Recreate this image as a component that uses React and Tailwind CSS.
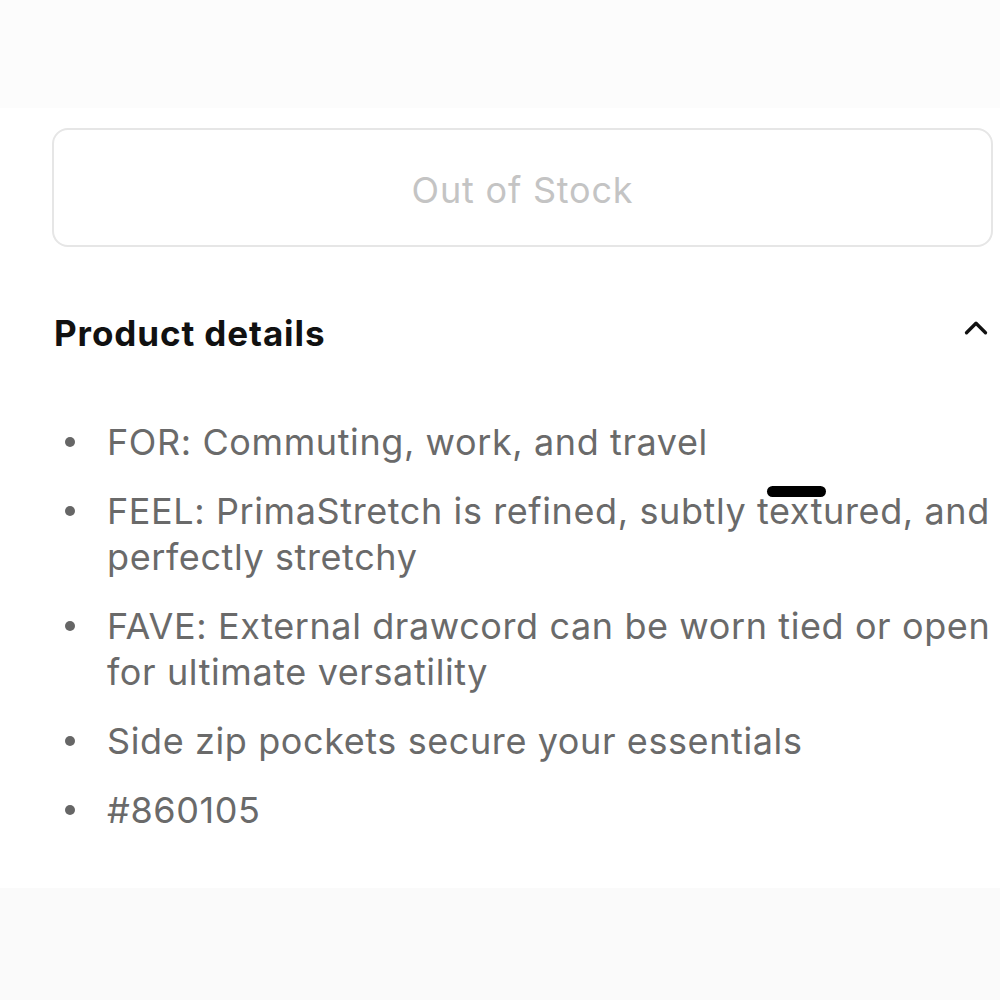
import { ChevronUp } from "lucide-react";

const details = [
  "FOR: Commuting, work, and travel",
  "FEEL: PrimaStretch is refined, subtly textured, and perfectly stretchy",
  "FAVE: External drawcord can be worn tied or open for ultimate versatility",
  "Side zip pockets secure your essentials",
  "#860105",
];

export default function App() {
  return (
    <div className="w-[1000px] h-[1000px] overflow-hidden bg-white flex flex-col" style={{ fontFamily: "Inter, 'Noto Sans', sans-serif" }}>
      <div className="h-[108px] bg-[#fcfcfc]" />

      <div className="flex-1 pl-[52px] pr-[2px] pt-[20px]">
        <div className="pr-[5px]">
          <button className="w-full h-[119px] rounded-[16px] border-2 border-[#e6e6e6] bg-white text-[36px] text-[#c4c4c4] tracking-[0.8px] pt-[4px]">
            Out of Stock
          </button>
        </div>

        <div className="mt-[60px] flex items-center justify-between pl-[2px]">
          <h2 className="text-[35px] font-bold text-[#111] tracking-[0.9px]">Product details</h2>
          <ChevronUp className="w-[38px] h-[38px] text-[#111] mr-[3px] -mt-[10px]" strokeWidth={2.1} />
        </div>

        <ul className="mt-[59px] flex flex-col gap-[23px]">
          {details.map((d, i) => (
            <li key={i} className="flex items-start text-[36px] leading-[46px] text-[#6a6a6a] tracking-[0.6px]">
              <span className="w-[55px] shrink-0 flex justify-start pl-[13px] pt-[18px]">
                <span className="w-[10px] h-[10px] rounded-full bg-[#666]" />
              </span>
              <span className="relative">
                {d}
                {i === 1 && (
                  <span className="absolute left-[660px] top-[-2px] w-[59px] h-[11px] rounded-full bg-black" />
                )}
              </span>
            </li>
          ))}
        </ul>
      </div>

      <div className="h-[112px] bg-[#fafafa]" />
    </div>
  );
}
